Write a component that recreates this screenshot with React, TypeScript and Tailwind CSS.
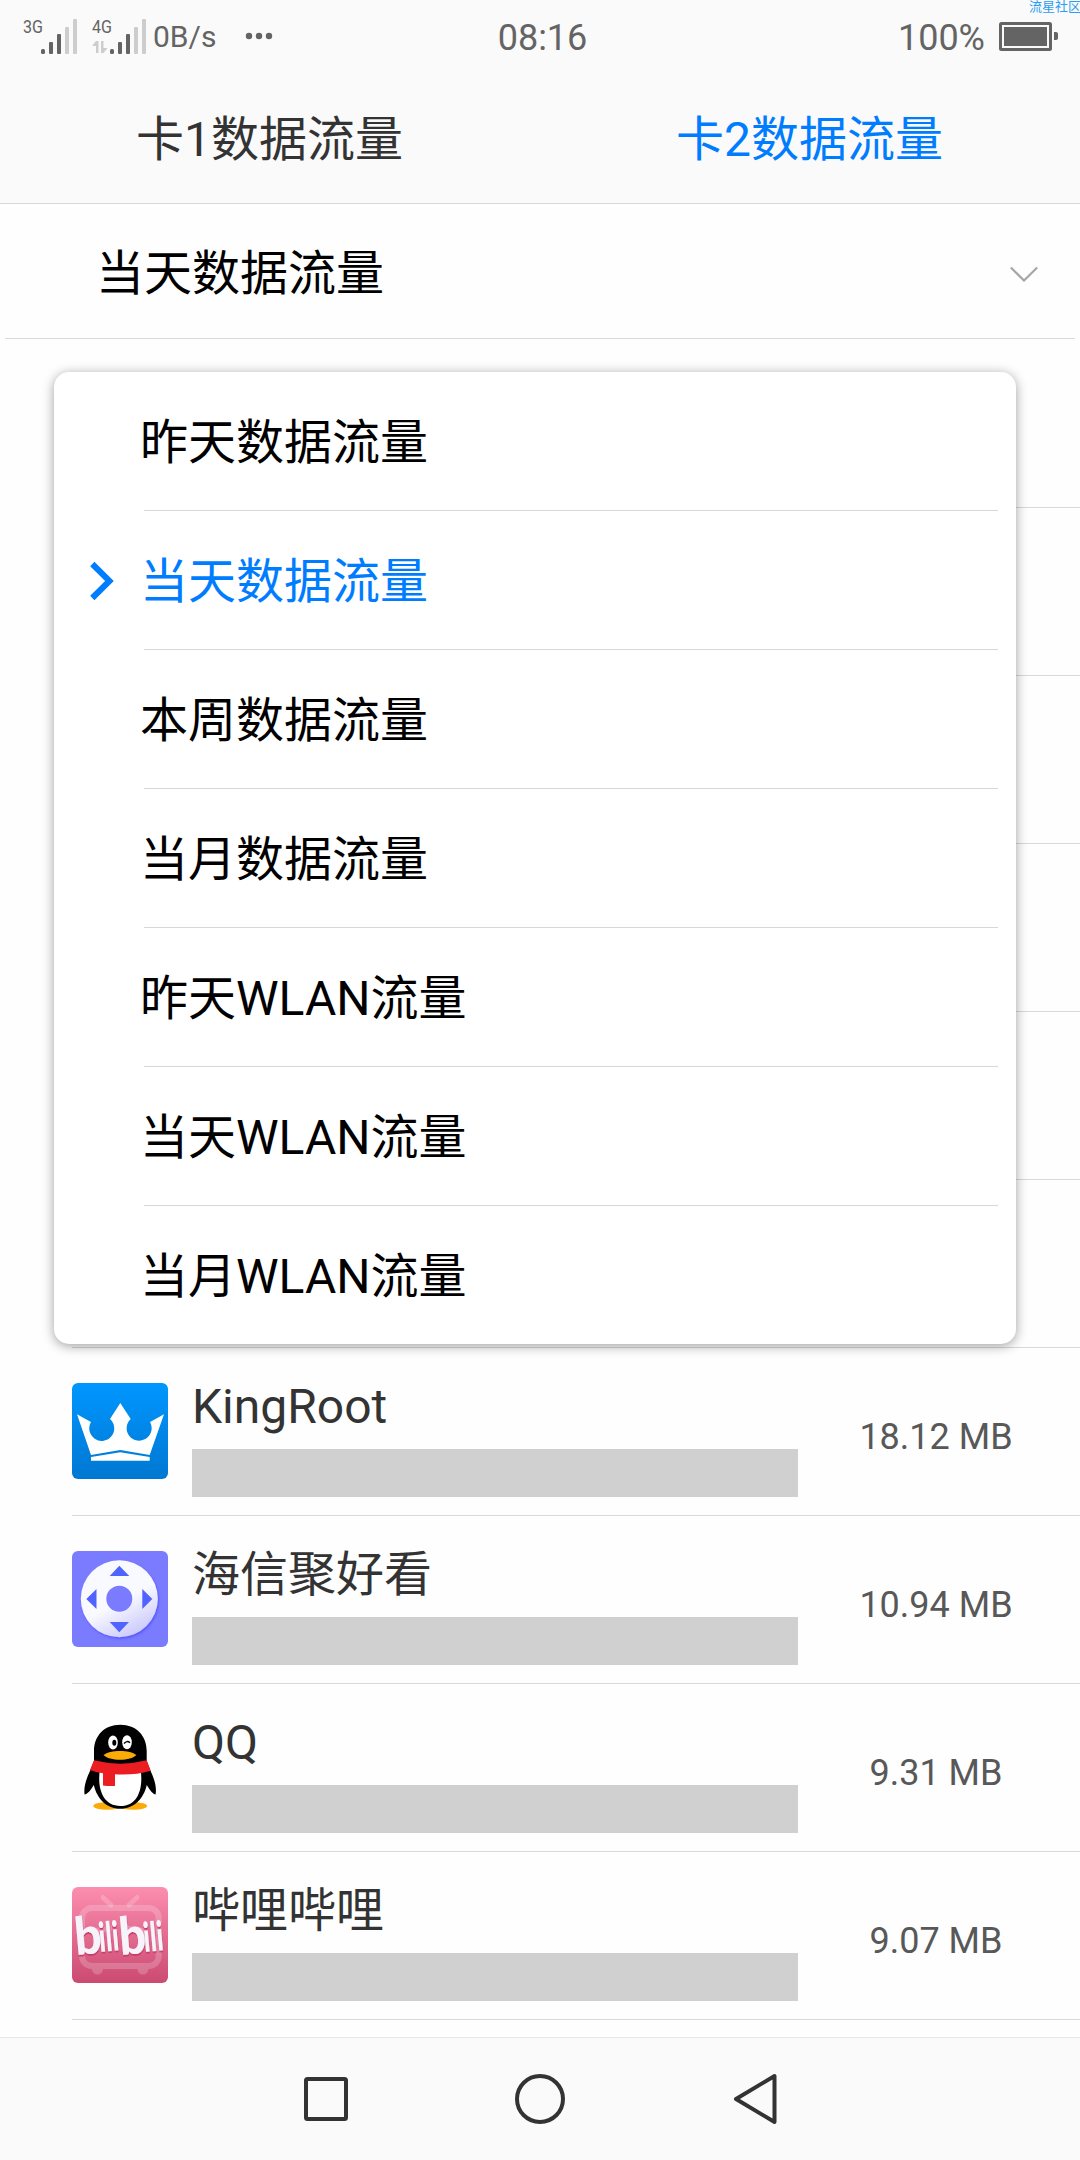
import React from 'react';

interface AppUsage {
  name: string;
  usage: string;
  icon: React.ReactNode;
}

const KingRootIcon = () => (
  <svg viewBox="0 0 96 96" className="w-24 h-24 rounded-md">
    <defs>
      <linearGradient id="kingroot" x1="0" y1="0" x2="0" y2="1">
        <stop offset="0" stopColor="#0096ff" />
        <stop offset="1" stopColor="#0078d2" />
      </linearGradient>
    </defs>
    <rect width="96" height="96" fill="url(#kingroot)" />
    <path
      d="M5 31.3 L19 39 A12.5 12.5 0 1 0 38 36 L48.3 20 L58.7 36 A12.5 12.5 0 1 0 78 39 L92 31.3 L77.7 72 L48.3 67 L19 72 Z"
      fill="#fff"
    />
    <path d="M19 74 L48.3 69.3 L77.7 74 V77.7 H19 Z" fill="#fff" />
  </svg>
);

const RemoteIcon = () => (
  <svg viewBox="0 0 96 96" className="w-24 h-24 rounded-md">
    <defs>
      <linearGradient id="remote" x1="0.3" y1="0.1" x2="0.75" y2="0.95">
        <stop offset="0.5" stopColor="#f9faff" />
        <stop offset="1" stopColor="#cbc9fb" />
      </linearGradient>
      <filter id="remoteShadow" x="-20%" y="-20%" width="140%" height="140%">
        <feDropShadow dx="1" dy="1.5" stdDeviation="1.2" floodColor="#4c4cff" floodOpacity="0.8" />
      </filter>
    </defs>
    <rect width="96" height="96" fill="#7a7bff" />
    <circle cx="47.3" cy="47.7" r="38.5" fill="url(#remote)" filter="url(#remoteShadow)" />
    <circle cx="47.3" cy="47.7" r="13" fill="#7a7bff" />
    <path
      d="M47.3 14.7 L57.3 25 H37.7 Z M14.3 48 L24.5 38 V58 Z M80.3 48 L70.3 38 V58 Z M47.3 81.3 L37.7 71 H57 Z"
      fill="#5063ff"
    />
  </svg>
);

const QQIcon = () => (
  <svg viewBox="0 0 96 96" className="w-24 h-24">
    <ellipse cx="35" cy="87" rx="13.7" ry="3.8" fill="#faab07" />
    <ellipse cx="61.4" cy="87" rx="13.7" ry="3.8" fill="#faab07" />
    <path
      d="M48.3 5.7 C32 5.7 22 17 22 32 V42 L18 52 C14 60 11.5 69 12.6 75.5 C15 75.5 19 71 21.8 66 C25 80 35 89.8 48.3 89.8 C61.6 89.8 71.6 80 74.8 66 C77.5 71 81.5 75.5 83.5 75.5 C85 69 82.5 60 78.6 52 L74.7 42 V32 C74.7 17 64.6 5.7 48.3 5.7 Z"
      fill="#000"
    />
    <path d="M28 50 C25 68 30 87 48.3 87 C66.6 87 71.5 68 68.5 50 Z" fill="#fff" />
    <ellipse cx="41" cy="23.5" rx="4.8" ry="7" fill="#fff" />
    <ellipse cx="55" cy="23.3" rx="4.8" ry="7" fill="#fff" />
    <ellipse cx="42.3" cy="23.8" rx="2" ry="3" fill="#000" />
    <path d="M52 24.5 Q55 21 58 23.8" fill="none" stroke="#000" strokeWidth="1.4" />
    <path d="M31.5 36 C38 30.5 58 30.5 64.4 36 C59 42.3 37 42.3 31.5 36 Z" fill="#faab07" />
    <path
      d="M22 41.3 Q48.3 48 74.7 41.3 L78.7 51.7 Q62 56.5 43 55.3 V67 Q36 67.3 31 66.5 V54.3 Q24 53.5 18 51 Z"
      fill="#eb1c22"
    />
  </svg>
);

const BilibiliIcon = () => (
  <svg viewBox="0 0 96 96" className="w-24 h-24 rounded-md">
    <defs>
      <linearGradient id="bili" x1="0" y1="0" x2="0" y2="1">
        <stop offset="0" stopColor="#fc8eb0" />
        <stop offset="1" stopColor="#cb4a72" />
      </linearGradient>
      <filter id="biliShadow">
        <feDropShadow dx="0.3" dy="1.8" stdDeviation="0.3" floodColor="#c93a68" />
      </filter>
    </defs>
    <rect width="96" height="96" fill="url(#bili)" />
    <g fill="none" stroke="#fff" strokeOpacity="0.2" strokeWidth="6">
      <path d="M31 10.5 L39 18 M65 10.5 L57 18" strokeWidth="5" strokeLinecap="round" />
      <rect x="10" y="21" width="76.7" height="58" rx="10" />
      <path d="M21 44 L40 41 M54 41 L74 44" strokeWidth="5" />
    </g>
    <path d="M20 82 H31 A5.5 5.5 0 0 1 20 82 Z M65.5 82 H76.5 A5.5 5.5 0 0 1 65.5 82 Z" fill="#fff" fillOpacity="0.2" />
    <g fontFamily="Lato, sans-serif" fontWeight="900" fill="#f6f4fa" filter="url(#biliShadow)">
      <text transform="translate(4 68) rotate(-5)" fontSize="52" textLength="27" lengthAdjust="spacingAndGlyphs">b</text>
      <text transform="translate(28 65) rotate(-5)" fontSize="41" textLength="20" lengthAdjust="spacingAndGlyphs">ili</text>
      <text transform="translate(48.5 68) rotate(-5)" fontSize="52" textLength="27" lengthAdjust="spacingAndGlyphs">b</text>
      <text transform="translate(72.5 65) rotate(-5)" fontSize="41" textLength="20" lengthAdjust="spacingAndGlyphs">ili</text>
    </g>
  </svg>
);

const periods = [
  '昨天数据流量',
  '当天数据流量',
  '本周数据流量',
  '当月数据流量',
  '昨天WLAN流量',
  '当天WLAN流量',
  '当月WLAN流量'
];

const selectedPeriod = '当天数据流量';

const apps: AppUsage[] = [
  { name: 'KingRoot', usage: '18.12 MB', icon: <KingRootIcon /> },
  { name: '海信聚好看', usage: '10.94 MB', icon: <RemoteIcon /> },
  { name: 'QQ', usage: '9.31 MB', icon: <QQIcon /> },
  { name: '哔哩哔哩', usage: '9.07 MB', icon: <BilibiliIcon /> }
];

// rows of the list that sit behind the open menu
const coveredRows = [0, 1, 2, 3, 4, 5];

const Signal: React.FC<{ label: string; data?: boolean }> = ({ label, data }) => (
  <svg width="56" height="37" viewBox="0 0 56 37" fill="#646464" className="overflow-visible">
    <text x="0" y="15" fontSize="18.5" textLength="20" lengthAdjust="spacingAndGlyphs">
      {label}
    </text>
    {data && <path d="M0 28 L4 23 H6.5 V35 H4 V28 Z M9 23 H11.5 V30 H15.5 L11.5 35 H9 Z" fill="#cdcdcd" />}
    <rect x="18" y="31" width="4" height="5" rx="1.5" />
    <rect x="26" y="24" width="4" height="12" rx="1" />
    <rect x="34" y="16" width="4" height="20" rx="1" />
    <rect x="42" y="9" width="4" height="27" rx="1" fill="#cdcdcd" />
    <rect x="50" y="1" width="4" height="35" rx="1" fill="#cdcdcd" />
  </svg>
);

const StatusBar = () => (
  <div className="relative grid grid-cols-[1fr_auto_1fr] items-center h-[72px] text-[#646464]">
    <div className="flex items-center pl-[23px]">
      <Signal label="3G" />
      <div className="w-[13px]" />
      <Signal label="4G" data />
      <span className="ml-[5px] pt-0.5 text-[30px] leading-none">0B/s</span>
      <svg width="28" height="8" viewBox="0 0 28 8" className="ml-[29px]" fill="#646464">
        <circle cx="4" cy="4" r="3.2" />
        <circle cx="14" cy="4" r="3.2" />
        <circle cx="24" cy="4" r="3.2" />
      </svg>
    </div>
    <span className="text-[36px] leading-none pl-[5px] pt-[3px]">08:16</span>
    <div className="flex items-center justify-end pr-[21px]">
      <span className="text-[36px] leading-none pt-[3px]">100%</span>
      <svg width="60" height="30" viewBox="0 0 60 30" className="ml-[14px]" fill="#646464">
        <rect x="1.5" y="2.5" width="50" height="26" rx="1" fill="none" stroke="#646464" strokeWidth="3" />
        <rect x="5" y="6" width="43" height="19" />
        <path d="M55 11 H57 Q59 11 59 13 V17 Q59 19 57 19 H55 Z" />
      </svg>
    </div>
    <span className="absolute top-0 left-[1029px] text-[13px] leading-[13px] text-[#2a9df4] whitespace-nowrap">
      流星社区
    </span>
  </div>
);

const PeriodMenu = () => (
  <ul className="absolute top-[372px] left-[54px] w-[962px] h-[972px] rounded-[15px] bg-white text-black shadow-[0_2px_12px_rgba(0,0,0,0.38)]">
    {periods.map((period, index) => {
      const selected = period === selectedPeriod;
      return (
        <li key={period} className="flex pr-[18px]">
          <div className="w-[90px] flex items-center pl-9">
            {selected && (
              <svg width="24" height="40" viewBox="0 0 24 40" fill="none" stroke="#007dff" strokeWidth="6">
                <path d="M2.3 3 L19.5 20 L2.3 37" />
              </svg>
            )}
          </div>
          <div
            className={`flex-1 h-[139px] flex items-center ${
              index < periods.length - 1 ? 'border-b border-[#d8d8d8]' : ''
            } ${selected ? 'text-[#007dff]' : ''}`}
          >
            <span className={`-ml-1 ${index < periods.length - 1 ? 'pt-[3px]' : 'pt-0.5'}`}>{period}</span>
          </div>
        </li>
      );
    })}
  </ul>
);

const NavBar = () => (
  <div className="flex items-center justify-center gap-[166px] h-[123px] border-t border-[#e8e8e8] bg-[#fafafa]">
    <svg width="50" height="52" viewBox="0 0 50 52" fill="none" stroke="#333" strokeWidth="4">
      <rect x="7" y="6" width="40" height="40" rx="1.5" />
    </svg>
    <svg width="50" height="52" viewBox="0 0 50 52" fill="none" stroke="#333" strokeWidth="4">
      <circle cx="25" cy="26" r="23" />
    </svg>
    <svg width="50" height="52" viewBox="0 0 50 52" fill="none" stroke="#333" strokeWidth="4" strokeLinejoin="round">
      <path d="M5 26 L43.5 3 V49 Z" />
    </svg>
  </div>
);

export default function App() {
  return (
    <div className="relative flex flex-col w-[1080px] h-[2160px] overflow-hidden bg-[#fefefe] text-[48px] leading-none font-['Roboto','Noto_Sans_CJK_SC',sans-serif]">
      <header className="h-[204px] border-b border-[#d8d8d8] bg-[#fafafa]">
        <StatusBar />
        <nav className="grid grid-cols-2 h-[131px] pt-[5px] items-center text-center">
          <span className="-ml-px text-[#333]">卡1数据流量</span>
          <span className="-ml-px text-[#007dff]">卡2数据流量</span>
        </nav>
      </header>

      <div className="flex items-center justify-between h-[135px] mx-[5px] pt-[5px] pl-[91px] pr-[37px] border-b border-[#d8d8d8] text-black">
        <span>{selectedPeriod}</span>
        <svg width="28" height="16" viewBox="0 0 28 16" fill="none" stroke="#a6a6a6" strokeWidth="2.2">
          <path d="M0.8 1.5 L14 14.5 L27.2 1.5" />
        </svg>
      </div>

      <main className="flex-1 pt-px pl-[72px] overflow-hidden">
        {coveredRows.map((row) => (
          <div key={row} className="h-[168px] border-b border-[#d8d8d8]" />
        ))}
        {apps.map((app) => (
          <div key={app.name} className="flex h-[168px] border-b border-[#d8d8d8]">
            <div className="pt-[35px]">{app.icon}</div>
            <div className="w-[606px] ml-6 pt-[35px]">
              <p className="h-[66px] text-[#333] leading-[48px]">{app.name}</p>
              <div className="h-12 bg-[#d0d0d0]" />
            </div>
            <div className="w-[276px] pt-2.5 flex items-center justify-center text-[36px] text-[#585858]">
              {app.usage}
            </div>
          </div>
        ))}
      </main>

      <NavBar />
      <PeriodMenu />
    </div>
  );
}
